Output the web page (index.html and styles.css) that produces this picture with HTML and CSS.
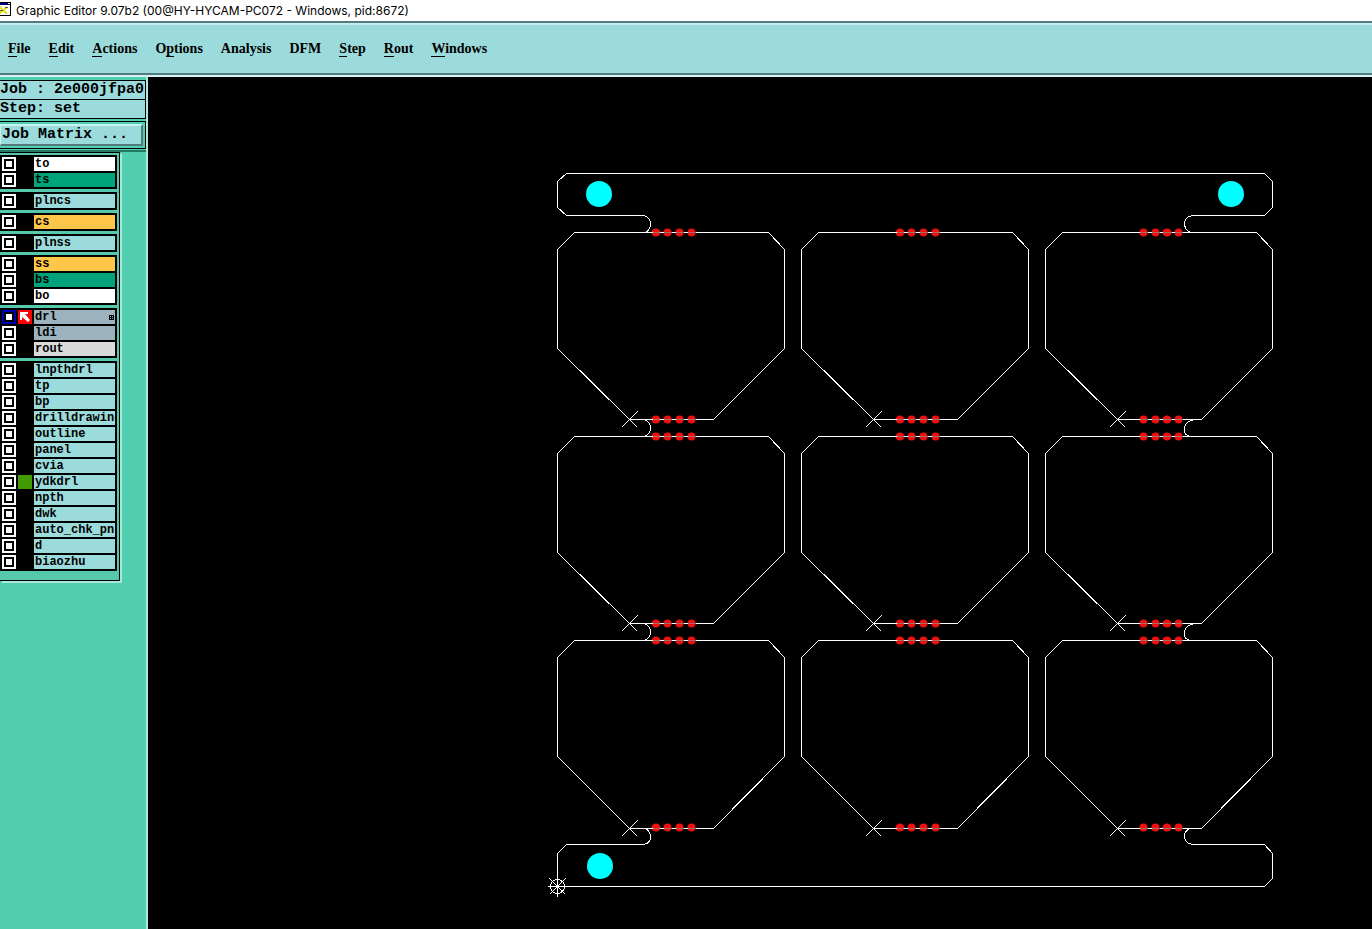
FILE: index.html
```html
<!DOCTYPE html>
<html lang="en">
<head>
<meta charset="utf-8">
<title>Graphic Editor</title>
<link rel="stylesheet" href="styles.css">
</head>
<body>
<div class="app">
<header class="titlebar">
  <svg class="app-icon" width="11" height="16" viewBox="0 0 11 16" aria-hidden="true" shape-rendering="crispEdges">
    <path fill="#000" d="M0 2h11v15H0z"/><path fill="#fff" d="M0 5h10v10H0z"/><path fill="#000080" d="M0 3h8v2H0z"/><path fill="#fff" d="M8 3h2v1H8z"/>
    <path d="M0 7l7 7M7 7L0 13" stroke="#e8df20" stroke-width="2"/><path d="M0 10h3M5 7l3 1" stroke="#555"/>
  </svg>
  <h1 class="title">Graphic Editor 9.07b2 (00@HY-HYCAM-PC072 - Windows, pid:8672)</h1>
</header>
<nav class="menubar">
  <button class="menu"><span class="key">F</span>ile</button>
  <button class="menu"><span class="key">E</span>dit</button>
  <button class="menu"><span class="key">A</span>ctions</button>
  <button class="menu">O<span class="key">p</span>tions</button>
  <button class="menu">Analysis</button>
  <button class="menu">DFM</button>
  <button class="menu"><span class="key">S</span>tep</button>
  <button class="menu"><span class="key">R</span>out</button>
  <button class="menu"><span class="key">W</span>indows</button>
</nav>
<div class="workspace">
  <aside class="sidebar">
    <div class="job">
      <div class="info">
        <div class="info-row">Job : 2e000jfpa0</div>
        <div class="info-row">Step: set</div>
      </div>
      <div class="matrix-frame"><button class="matrix">Job Matrix ...</button></div>
    </div>
    <div class="layers">
      <div class="group">
        <label class="layer"><input type="checkbox" class="tick"><span class="slot"></span><span class="name white">to</span></label>
        <label class="layer"><input type="checkbox" class="tick"><span class="slot"></span><span class="name green">ts</span></label>
      </div>
      <div class="group">
        <label class="layer"><input type="checkbox" class="tick"><span class="slot"></span><span class="name">plncs</span></label>
      </div>
      <div class="group">
        <label class="layer"><input type="checkbox" class="tick"><span class="slot"></span><span class="name amber">cs</span></label>
      </div>
      <div class="group">
        <label class="layer"><input type="checkbox" class="tick"><span class="slot"></span><span class="name">plnss</span></label>
      </div>
      <div class="group">
        <label class="layer"><input type="checkbox" class="tick"><span class="slot"></span><span class="name amber">ss</span></label>
        <label class="layer"><input type="checkbox" class="tick"><span class="slot"></span><span class="name green">bs</span></label>
        <label class="layer"><input type="checkbox" class="tick"><span class="slot"></span><span class="name white">bo</span></label>
      </div>
      <div class="group">
        <label class="layer"><input type="checkbox" class="tick" checked><span class="slot red"><svg class="arrow" width="14" height="14" viewBox="0 0 14 14" aria-hidden="true"><path fill="#fff" d="M2 2h8v2H7l5 6-2 2-6-5v3H2z"/></svg></span><span class="name steel">drl<svg class="grid-mark" width="5" height="5" viewBox="0 0 5 5" aria-hidden="true" shape-rendering="crispEdges"><path fill="#000" fill-rule="evenodd" d="M0 0h5v5H0zM1 1v1h1V1zM3 1v1h1V1zM1 3v1h1V3zM3 3v1h1V3z"/></svg></span></label>
        <label class="layer"><input type="checkbox" class="tick"><span class="slot"></span><span class="name steel">ldi</span></label>
        <label class="layer"><input type="checkbox" class="tick"><span class="slot"></span><span class="name grey">rout</span></label>
      </div>
      <div class="group">
        <label class="layer"><input type="checkbox" class="tick"><span class="slot"></span><span class="name">lnpthdrl</span></label>
        <label class="layer"><input type="checkbox" class="tick"><span class="slot"></span><span class="name">tp</span></label>
        <label class="layer"><input type="checkbox" class="tick"><span class="slot"></span><span class="name">bp</span></label>
        <label class="layer"><input type="checkbox" class="tick"><span class="slot"></span><span class="name">drilldrawing</span></label>
        <label class="layer"><input type="checkbox" class="tick"><span class="slot"></span><span class="name">outline</span></label>
        <label class="layer"><input type="checkbox" class="tick"><span class="slot"></span><span class="name">panel</span></label>
        <label class="layer"><input type="checkbox" class="tick"><span class="slot"></span><span class="name">cvia</span></label>
        <label class="layer"><input type="checkbox" class="tick"><span class="slot lime"></span><span class="name">ydkdrl</span></label>
        <label class="layer"><input type="checkbox" class="tick"><span class="slot"></span><span class="name">npth</span></label>
        <label class="layer"><input type="checkbox" class="tick"><span class="slot"></span><span class="name">dwk</span></label>
        <label class="layer"><input type="checkbox" class="tick"><span class="slot"></span><span class="name">auto_chk_pnl</span></label>
        <label class="layer"><input type="checkbox" class="tick"><span class="slot"></span><span class="name">d</span></label>
        <label class="layer"><input type="checkbox" class="tick"><span class="slot"></span><span class="name">biaozhu</span></label>
      </div>
    </div>
  </aside>
  <main class="canvas">
    <svg class="drawing" role="img" aria-label="Panel drawing">
      <defs>
        <g id="board">
          <path d="M17 0H211L227 17V116L156 187H72L0 116V17Z"/>
          <path d="M64 179L80 195M80 179L64 195"/>
        </g>
        <g id="board-tall">
          <path d="M17 0H211L227 17V116L156 188H72L0 116V17Z"/>
          <path d="M64 180L80 196M80 180L64 196"/>
        </g>
        <g id="dots-left"><ellipse cx="98.500" rx="4.500" ry="4"/><circle cx="110" r="4"/><circle cx="122" r="4"/><circle cx="134" r="4"/></g>
        <g id="dots-right"><circle cx="98" r="4"/><circle cx="110" r="4"/><ellipse cx="121.500" rx="4.500" ry="4"/><circle cx="133" r="4"/></g>
        <g id="pair"><use href="#dots-left"/><use href="#dots-left" x="244"/><use href="#dots-right" x="488"/></g>
        <g id="seams">
          <path d="M95 0h7M106 0h8M118 0h8M130 0h8M339 0h7M350 0h8M362 0h8M374 0h8M582 0h8M594 0h8M605 0h9M617 0h8"/>
        </g>
        <path id="tab-left" d="M86 0Q93 2 93 8.500T86 17"/>
        <path id="tab-right" d="M638 0Q628 1 627 8.500T633 17"/>
      </defs>
      <g transform="translate(409.500 96.500)">
        <g fill="#f01010">
          <use href="#pair" y="59"/><use href="#pair" y="246"/><use href="#pair" y="263"/>
          <use href="#pair" y="450"/><use href="#pair" y="467"/><use href="#pair" y="654"/>
        </g>
        <g fill="none" stroke="#fff" shape-rendering="crispEdges">
          <use href="#board" y="59"/><use href="#board" x="244" y="59"/><use href="#board" x="488" y="59"/>
          <use href="#board" y="263"/><use href="#board" x="244" y="263"/><use href="#board" x="488" y="263"/>
          <use href="#board-tall" y="467"/><use href="#board-tall" x="244" y="467"/><use href="#board-tall" x="488" y="467"/>
          <use href="#tab-left" y="246"/><use href="#tab-left" y="450"/>
          <use href="#tab-right" y="246"/><use href="#tab-right" y="450"/>
          <path d="M88 59Q93 56 93 50Q93 44 86 42H9L0 34V8L9 0H707L715 8V34L707 42H635Q627 43 627 51Q628 58 634 59"/>
          <path d="M88 655Q93 658 93 663Q93 670 86 671H9L0 680V713H707L715 705V680L707 671H635Q627 670 627 662Q627 658 632 655"/>
          <circle cx="0" cy="713" r="7"/>
          <path d="M-10 713H10M0 703V723M-8 705L8 721M8 705L-8 721"/>
        </g>
        <g stroke="#a07070" shape-rendering="crispEdges">
          <use href="#seams" y="59"/><use href="#seams" y="246"/><use href="#seams" y="263"/>
          <use href="#seams" y="450"/><use href="#seams" y="467"/><use href="#seams" y="655"/>
        </g>
        <g fill="#0ff"><circle cx="41.500" cy="20.500" r="13"/><circle cx="673.500" cy="20.500" r="13"/><circle cx="42.500" cy="692.500" r="13"/></g>
      </g>
    </svg>
  </main>
</div>
</div>
</body>
</html>
```
FILE: styles.css
```css
* { box-sizing: border-box; }

body {
  margin: 0;
  color: #000;
  background: #000;
}

button { cursor: pointer; }

.app {
  display: flex;
  flex-direction: column;
  height: 100vh;
}

.titlebar {
  display: flex;
  align-items: center;
  gap: 5px;
  height: 21px;
  background: #fff;
}

.app-icon { align-self: flex-start; }

.title {
  margin: 0;
  font: 400 12px/20px Inter, "Noto Sans", sans-serif;
  white-space: nowrap;
}

.menubar {
  display: flex;
  align-items: center;
  gap: 18px;
  height: 56px;
  padding: 0 8px;
  background: #9cdbdb;
  border-top: 2px solid #527b7b;
  border-bottom: 2px solid #d6f1f1;
  box-shadow: inset 0 2px #c6eded, inset 0 -2px #527b7b;
}

.menu {
  padding: 0;
  border: 0;
  background: none;
  font: 700 14px/20px "Liberation Serif", serif;
}

.key { border-bottom: 1px solid #000; }

.workspace {
  display: flex;
  flex: 1;
  min-height: 0;
}

.sidebar {
  flex: none;
  width: 148px;
  background: #52ceb0;
  border-right: 2px solid #b0e8dc;
  overflow: hidden;
}

.job {
  padding: 3px 0 1px;
  border-bottom: 2px solid #267860;
}

.info, .matrix-frame {
  border: solid #000;
  border-width: 1px 1px 1px 0;
}

.info-row {
  height: 18px;
  background: #9cdbdb;
  font: 700 15px/18px "Liberation Mono", monospace;
  white-space: nowrap;
}

.info-row + .info-row {
  height: 19px;
  border-top: 1px solid #000;
}

.matrix-frame {
  margin-top: 2px;
  padding: 2px 2px 2px 0;
}

.matrix {
  display: block;
  width: 100%;
  height: 22px;
  padding: 0 1px;
  border: 2px solid;
  border-color: #c6f3f0 #527b7b #527b7b #c6f3f0;
  border-left-width: 1px;
  background: #9cdbdb;
  font: 700 15px/18px "Liberation Mono", monospace;
  text-align: left;
}

.layers {
  display: flex;
  flex-direction: column;
  align-items: flex-start;
  gap: 3px;
  width: 120px;
  padding: 2px 0 9px;
  border: solid #000;
  border-width: 1px 1px 1px 0;
  background: #56c9ad;
  box-shadow: 2px 2px #a8e8d8;
}

.group {
  display: grid;
  gap: 2px;
  padding: 2px;
  background: #000;
}

.layer {
  display: grid;
  grid-template-columns: 14px 14px 81px;
  gap: 2px;
  height: 14px;
}

.tick {
  appearance: none;
  width: 14px;
  height: 14px;
  margin: 0;
  border: 2px solid #fff;
  background: #fff;
  box-shadow: inset 0 0 0 2px #000;
}

.tick:checked { border-color: #0000b8; }

.slot { background: #000; }
.slot.red { background: #f00; }
.slot.lime { background: #429a00; }
.arrow { display: block; }

.name {
  display: flex;
  align-items: center;
  justify-content: space-between;
  padding: 0 1px;
  overflow: hidden;
  background: #9cdbdb;
  font: 700 12px/14px "Liberation Mono", monospace;
  white-space: nowrap;
}

.name.white { background: #fff; }
.name.green { background: #00a47b; }
.name.amber { background: #ffc74a; }
.name.steel { background: #9cb3bd; }
.name.grey { background: #dadada; }

.canvas {
  flex: 1;
  min-width: 0;
  background: #000;
}

.drawing {
  display: block;
  width: 100%;
  height: 100%;
}
```
